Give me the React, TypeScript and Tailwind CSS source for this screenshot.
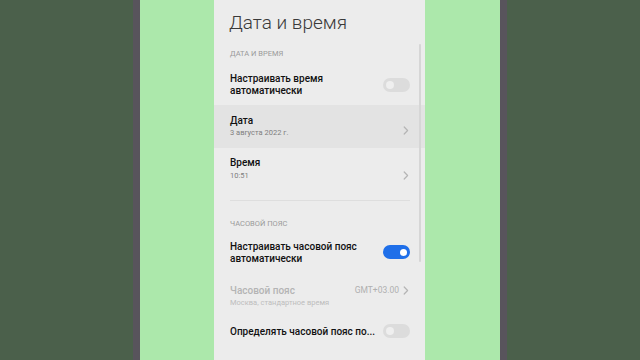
import React from "react";

function Chevron({ className = "" }: { className?: string }) {
  return (
    <svg width="6" height="9" viewBox="0 0 6 9" className={className}>
      <path d="M1.2 1 L4.6 4.5 L1.2 8" fill="none" stroke="#b4b4b4" strokeWidth="1.2" strokeLinecap="round" strokeLinejoin="round" />
    </svg>
  );
}

function Toggle({ on }: { on?: boolean }) {
  return on ? (
    <div className="w-[27px] h-[14px] rounded-full bg-[#1f6fe9] flex items-center justify-end pr-[3px]">
      <div className="w-[7px] h-[7px] rounded-full bg-white" />
    </div>
  ) : (
    <div className="w-[27px] h-[14px] rounded-full bg-[#dcdcdc] flex items-center pl-[3px]">
      <div className="w-[8px] h-[8px] rounded-full bg-[#efefef]" />
    </div>
  );
}

export default function App() {
  return (
    <div
      className="w-[640px] h-[360px] flex overflow-hidden"
      style={{ fontFamily: "Roboto, 'Noto Sans', sans-serif" }}
    >
      <div className="w-[133px] h-full bg-[#4b604b]" />
      <div className="w-[7px] h-full bg-[#58545c]" />
      <div className="w-[74px] h-full bg-[#ace8ab]" />

      {/* phone screen */}
      <div className="w-[211px] h-full bg-[#ececec] relative flex flex-col">
        <div className="absolute left-[205px] top-[44px] w-[2px] h-[218px] rounded-full bg-[#d6d6d6]" />

        <div className="h-[40px] pl-[15px] pt-[12px] text-[19px] leading-[22px] font-light text-[#3a3a3a]">
          Дата и время
        </div>

        <div className="h-[26px] pl-[16px] pt-[9px] text-[7.5px] leading-[10px] text-[#9a9a9a] uppercase">
          Дата и время
        </div>

        <div className="h-[39px] pl-[16px] pr-[15px] flex items-start pt-[7px] justify-between">
          <div className="text-[10px] leading-[12px] font-medium text-[#111]">
            Настраивать время
            <br />
            автоматически
          </div>
          <div className="mt-[5px]">
            <Toggle />
          </div>
        </div>

        <div className="h-[43px] pl-[16px] pr-[16px] pt-[10px] bg-[#e3e3e3] flex justify-between items-start">
          <div className="flex flex-col gap-[1px]">
            <div className="text-[10px] leading-[12px] font-medium text-[#111]">Дата</div>
            <div className="text-[7.5px] leading-[10px] text-[#7e7e7e]">3 августа 2022 г.</div>
          </div>
          <Chevron className="mt-[11px]" />
        </div>

        <div className="h-[42px] pl-[16px] pr-[16px] pt-[9px] flex justify-between items-start">
          <div className="flex flex-col gap-[2px]">
            <div className="text-[10px] leading-[12px] font-medium text-[#111]">Время</div>
            <div className="text-[7.5px] leading-[10px] text-[#7e7e7e]">10:51</div>
          </div>
          <Chevron className="mt-[14px]" />
        </div>

        <div className="h-[20px] pl-[16px] pr-[15px] flex items-center">
          <div className="w-full h-[1px] bg-[#dedede]" />
        </div>

        <div className="h-[24px] pl-[16px] pt-[9px] text-[7.5px] leading-[10px] text-[#9a9a9a] uppercase">
          Часовой пояс
        </div>

        <div className="h-[38px] pl-[16px] pr-[15px] flex items-start pt-[7px] justify-between">
          <div className="text-[10px] leading-[12px] font-medium text-[#111]">
            Настраивать часовой пояс
            <br />
            автоматически
          </div>
          <div className="mt-[4px]">
            <Toggle on />
          </div>
        </div>

        <div className="h-[44px] pl-[16px] pr-[16px] pt-[13px] flex justify-between items-start">
          <div className="flex flex-col gap-[1px]">
            <div className="text-[10px] leading-[12px] font-medium text-[#b4b4b4]">Часовой пояс</div>
            <div className="text-[7.5px] leading-[10px] text-[#bdbdbd]">Москва, стандартное время</div>
          </div>
          <div className="flex items-center gap-[4px]">
            <span className="text-[8.5px] leading-[10px] text-[#b0b0b0]">GMT+03.00</span>
            <Chevron />
          </div>
        </div>

        <div className="h-[30px] pl-[16px] pr-[15px] pt-[10px] flex justify-between items-start">
          <div className="text-[10px] leading-[12px] font-medium text-[#111]">
            Определять часовой пояс по...
          </div>
          <div className="-mt-[2px]">
            <Toggle />
          </div>
        </div>
      </div>

      <div className="w-[75px] h-full bg-[#ace8ab]" />
      <div className="w-[7px] h-full bg-[#58545c]" />
      <div className="flex-1 h-full bg-[#4b604b]" />
    </div>
  );
}
